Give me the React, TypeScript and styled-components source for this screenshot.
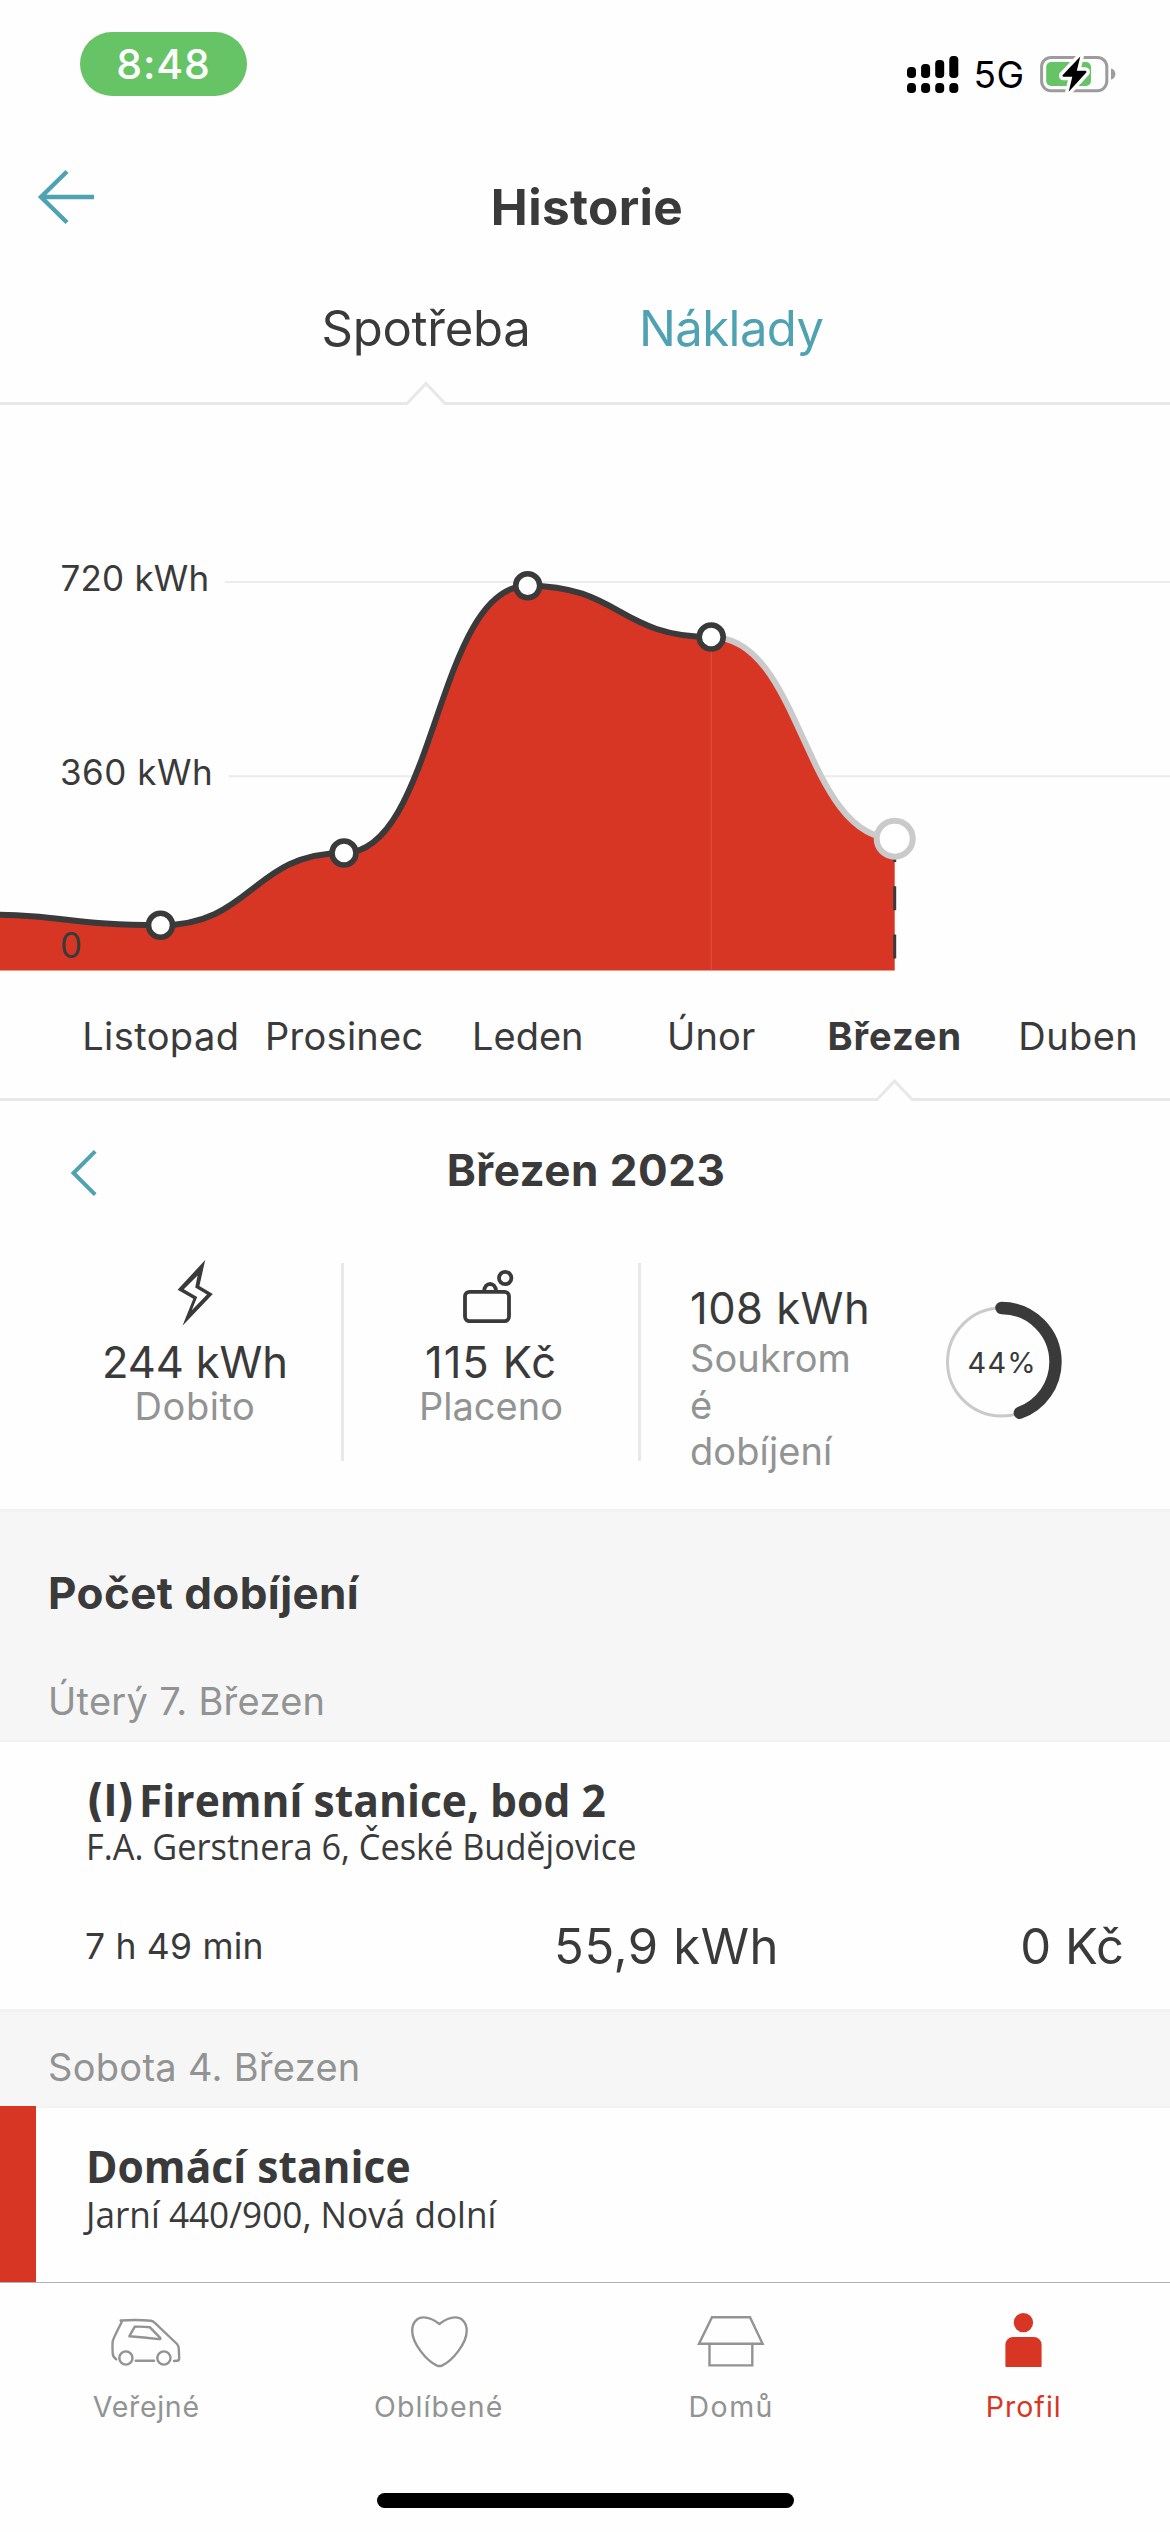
import React from 'react';
import styled, { createGlobalStyle } from 'styled-components';

const color = {
  ink: '#3a3a3a',
  muted: '#929393',
  teal: '#4fa2b1',
  red: '#d83625',
  line: '#e8e8e8',
  ground: '#fefefe',
  band: '#f6f6f6',
  bandEdge: '#f2f2f2',
  ring: '#cacaca',
};

const sans = 'Inter, "Liberation Sans", sans-serif';
const humanist = '"Open Sans", "Noto Sans", sans-serif';

const GlobalStyle = createGlobalStyle`
  * { box-sizing: border-box; }
  body { margin: 0; background: ${color.ground}; }
  svg { display: block; flex: none; }
`;

const Screen = styled.main`
  display: flex;
  flex-direction: column;
  width: 1170px;
  height: 2532px;
  overflow: hidden;
  background: ${color.ground};
  color: ${color.ink};
  font-family: ${sans};
`;

const StatusBar = styled.div`
  display: flex;
  align-items: flex-start;
  justify-content: space-between;
  height: 145px;
  padding: 32px 53px 0 80px;
`;

const TimePill = styled.div`
  display: flex;
  align-items: center;
  justify-content: center;
  width: 167px;
  height: 64px;
  border-radius: 32px;
  background: #67c466;
  color: #fff;
  font-size: 41px;
  font-weight: 500;
  line-height: 64px;
  letter-spacing: 0.95px;
`;

const StatusIcons = styled.div`
  display: flex;
  align-items: center;
  margin-top: 20px;
  height: 46px;
`;

const Network = styled.span`
  width: 81px;
  padding-left: 14.5px;
  color: #000;
  font-size: 37px;
  line-height: 48px;
  letter-spacing: 0.4px;
`;

const Header = styled.header`
  display: grid;
  grid-template-columns: 200px 1fr 200px;
  align-items: center;
  height: 124px;
`;

const BackButton = styled.button`
  width: 120px;
  height: 80px;
  margin: 0 0 20px;
  padding: 0 0 0 34px;
  border: 0;
  background: none;
  display: flex;
  align-items: center;
`;

const PageTitle = styled.h1`
  margin: 0;
  padding-left: 4px;
  text-align: center;
  font-size: 49.5px;
  font-weight: 650;
  line-height: 60px;
  letter-spacing: 0.35px;
`;

const Tabs = styled.nav`
  display: flex;
  gap: 108.5px;
  height: 112px;
  padding: 40px 0 0 321.5px;
`;

const Tab = styled.a<{ $active?: boolean }>`
  color: ${(p) => (p.$active ? color.ink : color.teal)};
  font-size: 49px;
  line-height: 40px;
  letter-spacing: ${(p) => (p.$active ? '-0.26px' : '-0.57px')};
`;

const AxisText = styled.text`
  fill: ${color.ink};
  font-family: ${sans};
  font-size: 35px;
`;

const Months = styled.div`
  display: grid;
  grid-template-columns: repeat(6, 183.5px);
  height: 106px;
  padding: 45px 0 0 69px;
`;

const Month = styled.span<{ $current?: boolean; $spacing: number }>`
  text-align: center;
  font-size: 38px;
  font-weight: ${(p) => (p.$current ? 700 : 400)};
  line-height: 40px;
  letter-spacing: ${(p) => p.$spacing}px;
`;

const PeriodHeader = styled.div`
  display: grid;
  grid-template-columns: 200px 1fr 200px;
  align-items: center;
  height: 137px;
`;

const PrevButton = styled.button`
  width: 120px;
  height: 80px;
  margin: 7px 0 0;
  padding: 0 0 0 68px;
  border: 0;
  background: none;
`;

const PeriodTitle = styled.h2`
  margin: 0;
  padding-left: 2px;
  text-align: center;
  font-size: 44px;
  font-weight: 650;
  line-height: 56px;
  letter-spacing: 0.5px;
`;

const Stats = styled.section`
  display: grid;
  grid-template-columns: 292px 297px 1fr;
  align-items: start;
  height: 271px;
  padding: 25px 0 0 49px;
`;

const Stat = styled.div<{ $divided?: boolean }>`
  display: flex;
  flex-direction: column;
  align-items: center;
  height: 198px;
  border-left: ${(p) => (p.$divided ? `3px solid ${color.line}` : '0')};
`;

const StatIcon = styled.svg`
  margin: -4px 0 10px;
`;

const StatValue = styled.span<{ $spacing: number; $line?: number }>`
  font-size: 43.5px;
  line-height: ${(p) => p.$line ?? 46}px;
  letter-spacing: ${(p) => p.$spacing}px;
  white-space: nowrap;
`;

const StatLabel = styled.span<{ $spacing: number }>`
  color: ${color.muted};
  font-size: 38px;
  line-height: 42px;
  letter-spacing: ${(p) => p.$spacing}px;
`;

const PrivateStat = styled.div`
  display: flex;
  height: 198px;
  padding-left: 49px;
  border-left: 3px solid ${color.line};
`;

const PrivateText = styled.div`
  display: flex;
  flex-direction: column;
  width: 246px;
  padding-top: 20px;
`;

const PrivateLabel = styled.span`
  width: 164px;
  margin-top: 2px;
  color: ${color.muted};
  font-size: 38px;
  line-height: 46.5px;
  letter-spacing: 0.1px;
  overflow-wrap: anywhere;
`;

const RingChart = styled.svg`
  margin-top: 34px;
`;

const RingText = styled.text`
  fill: ${color.ink};
  font-family: ${sans};
  font-size: 29px;
  letter-spacing: 1.1px;
  text-anchor: middle;
`;

const Band = styled.div<{ $height: number; $top: number }>`
  display: flex;
  flex-direction: column;
  height: ${(p) => p.$height}px;
  padding: ${(p) => p.$top}px 0 0 48px;
  border-top: 3px solid ${color.bandEdge};
  background: ${color.band};
`;

const BandTitle = styled.h3`
  margin: 0 0 58px;
  font-size: 44px;
  font-weight: 650;
  line-height: 54px;
  letter-spacing: 0.4px;
`;

const DateLabel = styled.span`
  color: ${color.muted};
  font-size: 38px;
  line-height: 46px;
  letter-spacing: 0.29px;
`;

const Entry = styled.article<{ $height: number }>`
  display: flex;
  height: ${(p) => p.$height}px;
`;

const EntryMark = styled.div<{ $on?: boolean }>`
  flex: none;
  width: 36px;
  background: ${(p) => (p.$on ? color.red : color.ground)};
  border-top: ${(p) => (p.$on ? '0' : `2px solid ${color.bandEdge}`)};
`;

const EntryBody = styled.div`
  flex: 1;
  padding: 29px 48px 0 50px;
  border-top: 2px solid ${color.bandEdge};
`;

const StationLine = styled.div`
  display: flex;
  align-items: flex-start;
  height: 58px;
`;

const StationMarker = styled.span`
  width: 53px;
  font-size: 44px;
  font-weight: 650;
  line-height: 58px;
  letter-spacing: 0.8px;
`;

const StationName = styled.h4`
  margin: 0;
  font-family: ${humanist};
  font-size: 44.8px;
  font-weight: 700;
  line-height: 58px;
  transform: scaleX(0.95);
  transform-origin: left;
`;

const Address = styled.p<{ $line: number; $scale: number }>`
  margin: 0;
  font-family: ${humanist};
  font-size: 37px;
  line-height: ${(p) => p.$line}px;
  white-space: nowrap;
  transform: scaleX(${(p) => p.$scale});
  transform-origin: left;
`;

const Metrics = styled.div`
  display: grid;
  grid-template-columns: 468px 1fr auto;
  align-items: start;
  margin: 59px -2px 0 0;
`;

const Duration = styled.span`
  margin-left: -1px;
  font-size: 35.5px;
  line-height: 49px;
  letter-spacing: 0.2px;
`;

const Amount = styled.span<{ $spacing?: number }>`
  font-size: 49px;
  line-height: 50px;
  letter-spacing: ${(p) => p.$spacing ?? 0}px;
`;

const BottomBar = styled.footer`
  display: flex;
  flex-direction: column;
  align-items: center;
  height: 250px;
  background: ${color.ground};
  box-shadow: inset 0 1px 0 #b2b2b2;
`;

const NavItems = styled.nav`
  display: grid;
  grid-template-columns: repeat(4, 292.5px);
  width: 100%;
  height: 211px;
  padding-top: 26px;
`;

const NavItem = styled.a<{ $active?: boolean; $spacing: number }>`
  display: flex;
  flex-direction: column;
  align-items: center;
  gap: 15px;
  color: ${(p) => (p.$active ? color.red : color.muted)};
  font-size: 28.5px;
  line-height: 40px;
  letter-spacing: ${(p) => p.$spacing}px;
`;

const HomeIndicator = styled.div`
  width: 417px;
  height: 15px;
  border-radius: 8px;
  background: #000;
`;

const SignalIcon = () => (
  <svg width="52" height="46" viewBox="907 52 52 46">
    {[67, 64, 60, 56].map((top, i) => (
      <g key={top}>
        <rect x={907 + i * 14.1} y={top} width="9" height={78 - top} rx="3.8" />
        <rect x={907 + i * 14.1} y="83" width="9" height="10" rx="3.8" />
      </g>
    ))}
  </svg>
);

const BatteryIcon = () => (
  <svg width="77" height="46" viewBox="1040 52 77 46">
    <rect x="1041.6" y="57.4" width="65.2" height="33.4" rx="9.5" fill="none" stroke="#9c9c9c" strokeWidth="3" />
    <rect x="1046.2" y="62" width="44.8" height="24" rx="5" fill="#67c466" />
    <path d="M1111 68.5c3 .8 4.4 3 4.4 5.6s-1.400 4.800-4.400 5.600z" fill="#9c9c9c" />
    <path
      d="M1080.300 56.500L1062.500 75.200Q1062 76.600 1063.500 76.800L1072.300 76.800L1068.700 91.700L1086.300 72.500Q1086.800 71 1085.300 70.800L1076.800 70.800Z"
      fill="#000"
      stroke="#fff"
      strokeWidth="7"
      strokeLinejoin="round"
      paintOrder="stroke"
    />
  </svg>
);

const NotchLine = ({ x, half }: { x: number; half: number }) => (
  <svg width="1170" height="24" viewBox="0 0 1170 24">
    <path
      d={`M0 22.500H${x - half}L${x} ${22.5 - half - 1}L${x + half} 22.500H1170`}
      fill="none"
      stroke={color.line}
      strokeWidth="3"
    />
  </svg>
);

const points = [
  { x: -23, y: 914.5 },
  { x: 160.5, y: 925.3 },
  { x: 344, y: 853 },
  { x: 527.7, y: 585.7 },
  { x: 711.2, y: 637 },
  { x: 894.7, y: 838.7 },
];

const curve = (list: typeof points) =>
  list
    .map((p, i) => {
      if (i === 0) return `M${p.x} ${p.y}`;
      const prev = list[i - 1];
      const mid = (prev.x + p.x) / 2;
      return `C${mid} ${prev.y} ${mid} ${p.y} ${p.x} ${p.y}`;
    })
    .join('');

const Chart = () => (
  <svg width="1170" height="566" viewBox="0 405 1170 566">
    <path d="M225 582H1170M228.500 776.200H1170" stroke="#ebebeb" strokeWidth="2" />
    <path d={`${curve(points)}V970.600H-23Z`} fill={color.red} />
    <path d="M711.300 637V970" stroke="#dd5242" strokeWidth="1" />
    <path d="M894.700 838V970" stroke={color.ink} strokeWidth="3" strokeDasharray="24 24.200" />
    <path d={curve(points.slice(4))} fill="none" stroke={color.ring} strokeWidth="6" />
    <path d={curve(points.slice(0, 5))} fill="none" stroke={color.ink} strokeWidth="6" />
    {points.slice(1, 5).map((p) => (
      <circle key={p.x} cx={p.x} cy={p.y} r="12" fill="#fff" stroke={color.ink} strokeWidth="5.600" />
    ))}
    <circle cx="894.700" cy="838.700" r="18" fill="#fff" stroke={color.ring} strokeWidth="6" />
    <AxisText x="60.500" y="591" letterSpacing="0.200">720 kWh</AxisText>
    <AxisText x="60" y="785" letterSpacing="0.500">360 kWh</AxisText>
    <AxisText x="60" y="958">0</AxisText>
  </svg>
);

const RING = 2 * Math.PI * 54;

const Ring = ({ share }: { share: number }) => (
  <RingChart width="130" height="130" viewBox="0 0 130 130">
    <circle cx="65.500" cy="65" r="54" fill="none" stroke={color.ring} strokeWidth="3" />
    <circle
      cx="65.500"
      cy="65"
      r="54"
      fill="none"
      stroke={color.ink}
      strokeWidth="12.400"
      strokeLinecap="round"
      strokeDasharray={`${RING * share} ${RING}`}
      transform="rotate(-90 65.500 65)"
    />
    <RingText x="66.200" y="76">44%</RingText>
  </RingChart>
);

const months = [
  { name: 'Listopad', spacing: 0.42 },
  { name: 'Prosinec', spacing: 0.27 },
  { name: 'Leden', spacing: 0 },
  { name: 'Únor', spacing: 0.16 },
  { name: 'Březen', spacing: 0.96, current: true },
  { name: 'Duben', spacing: 0.42 },
];

const NavIcon = ({ children }: { children: React.ReactNode }) => (
  <svg
    width="80"
    height="64"
    viewBox="0 0 80 64"
    fill="none"
    stroke="currentColor"
    strokeWidth="2.400"
    strokeLinecap="round"
    strokeLinejoin="round"
  >
    {children}
  </svg>
);

export default function App() {
  return (
    <>
      <GlobalStyle />
      <Screen>
        <StatusBar>
          <TimePill>8:48</TimePill>
          <StatusIcons>
            <SignalIcon />
            <Network>5G</Network>
            <BatteryIcon />
          </StatusIcons>
        </StatusBar>

        <Header>
          <BackButton aria-label="Zpět">
            <svg width="64" height="64" viewBox="34 165 64 64" fill="none" stroke={color.teal} strokeWidth="4.400">
              <path d="M94 197H41M67 171.500L41 197L67 222.500" />
            </svg>
          </BackButton>
          <PageTitle>Historie</PageTitle>
        </Header>

        <Tabs>
          <Tab $active>Spotřeba</Tab>
          <Tab>Náklady</Tab>
        </Tabs>
        <NotchLine x={426} half={19} />

        <Chart />

        <Months>
          {months.map((m) => (
            <Month key={m.name} $current={m.current} $spacing={m.spacing}>{m.name}</Month>
          ))}
        </Months>
        <NotchLine x={894.6} half={17.5} />

        <PeriodHeader>
          <PrevButton aria-label="Předchozí měsíc">
            <svg width="32" height="52" viewBox="68 1147 32 52" fill="none" stroke={color.teal} strokeWidth="4">
              <path d="M95.200 1151.300L73.500 1173L95.200 1194.700" />
            </svg>
          </PrevButton>
          <PeriodTitle>Březen 2023</PeriodTitle>
        </PeriodHeader>

        <Stats>
          <Stat>
            <StatIcon width="80" height="70" viewBox="155 1259 80 70">
              <path
                fill={color.ink}
                fillRule="evenodd"
                d="M205.200 1260L177.600 1289.700L193.300 1298.700L182.500 1325.700L212.800 1294L199.400 1286ZM197.600 1275.500L195.200 1287.500L207 1294.400L191.800 1310.300L197.200 1296.900L183.800 1289.200Z"
              />
            </StatIcon>
            <StatValue $spacing={-0.14}>244 kWh</StatValue>
            <StatLabel $spacing={0.55}>Dobito</StatLabel>
          </Stat>
          <Stat $divided>
            <StatIcon width="80" height="70" viewBox="451 1259 80 70" fill="none" stroke={color.ink} strokeWidth="3.800">
              <rect x="465" y="1291.900" width="44" height="29.200" rx="4.500" />
              <path d="M484.200 1291.500C484.200 1281.500 496 1281.500 496 1291.500" />
              <circle cx="505.200" cy="1278" r="6.200" />
            </StatIcon>
            <StatValue $spacing={0.91}>115 Kč</StatValue>
            <StatLabel $spacing={0.03}>Placeno</StatLabel>
          </Stat>
          <PrivateStat>
            <PrivateText>
              <StatValue $spacing={0.48} $line={50}>108 kWh</StatValue>
              <PrivateLabel>Soukromé dobíjení</PrivateLabel>
            </PrivateText>
            <Ring share={0.444} />
          </PrivateStat>
        </Stats>

        <Band $height={231} $top={54}>
          <BandTitle>Počet dobíjení</BandTitle>
          <DateLabel>Úterý 7. Březen</DateLabel>
        </Band>
        <Entry $height={269}>
          <EntryMark />
          <EntryBody>
            <StationLine>
              <StationMarker>(I)</StationMarker>
              <StationName>Firemní stanice, bod 2</StationName>
            </StationLine>
            <Address $line={34} $scale={0.927}>F.A. Gerstnera 6, České Budějovice</Address>
            <Metrics>
              <Duration>7 h 49 min</Duration>
              <Amount $spacing={0.6}>55,9 kWh</Amount>
              <Amount>0 Kč</Amount>
            </Metrics>
          </EntryBody>
        </Entry>

        <Band $height={97} $top={32}>
          <DateLabel>Sobota 4. Březen</DateLabel>
        </Band>
        <Entry $height={176}>
          <EntryMark $on />
          <EntryBody>
            <StationLine>
              <StationName>Domácí stanice</StationName>
            </StationLine>
            <Address $line={38} $scale={0.95}>Jarní 440/900, Nová dolní</Address>
          </EntryBody>
        </Entry>

        <BottomBar>
          <NavItems>
            <NavItem $spacing={0.69}>
              <NavIcon>
                <path d="M10.200 51.300C7.600 49.500 6.800 48 6.700 45.500C6.400 41 6.400 37 6.600 33.700C7.200 30 14 17.500 15.600 14.200L14.600 12.500C24 11.800 36 11.800 44.900 12.800C46.800 13 47.600 13.600 48.600 14.600L71 36C72.500 37.500 72.600 38.500 72.800 41L73.200 50C73.200 52 72.500 52.700 71 52.800L68 53M29.800 52.700H48" />
                <path d="M23.400 28.200L28.800 18.700C34 18.500 39 18.700 44 19.300L54.200 29.800C54.800 30.800 54.200 31.300 53 31.100C43 29.800 33 28.800 23.400 28.200Z" />
                <circle cx="19.900" cy="50" r="6.600" />
                <circle cx="57.900" cy="50" r="6.600" />
              </NavIcon>
              Veřejné
            </NavItem>
            <NavItem $spacing={1.12}>
              <NavIcon>
                <path d="M40.400 16C34.500 11.500 29.500 9.400 24.800 9.400C17.500 9.400 13.200 15 13.200 22.700C13.200 35 27 52.500 38 57.600C39.700 58.200 41.200 58.200 42.900 57.600C54 52.500 67.700 35 67.700 22.700C67.700 15 63.400 9.400 56 9.400C51.300 9.400 46.300 11.500 40.400 16Z" />
              </NavIcon>
              Oblíbené
            </NavItem>
            <NavItem $spacing={1.46}>
              <NavIcon>
                <path strokeLinejoin="miter" d="M21 9.200H59L71.600 35.800H8Z" />
                <path strokeLinejoin="miter" d="M18.500 36V57.400H61.300V36" />
              </NavIcon>
              Domů
            </NavItem>
            <NavItem $active $spacing={1}>
              <NavIcon>
                <ellipse cx="39.400" cy="14.600" rx="9.700" ry="9.700" fill="currentColor" stroke="none" />
                <path
                  fill="currentColor"
                  stroke="none"
                  d="M29 29H50A7.600 7.600 0 0 1 57.600 36.600V58A1 1 0 0 1 56.600 59H22.400A1 1 0 0 1 21.400 58V36.600A7.600 7.600 0 0 1 29 29Z"
                />
              </NavIcon>
              Profil
            </NavItem>
          </NavItems>
          <HomeIndicator />
        </BottomBar>
      </Screen>
    </>
  );
}
